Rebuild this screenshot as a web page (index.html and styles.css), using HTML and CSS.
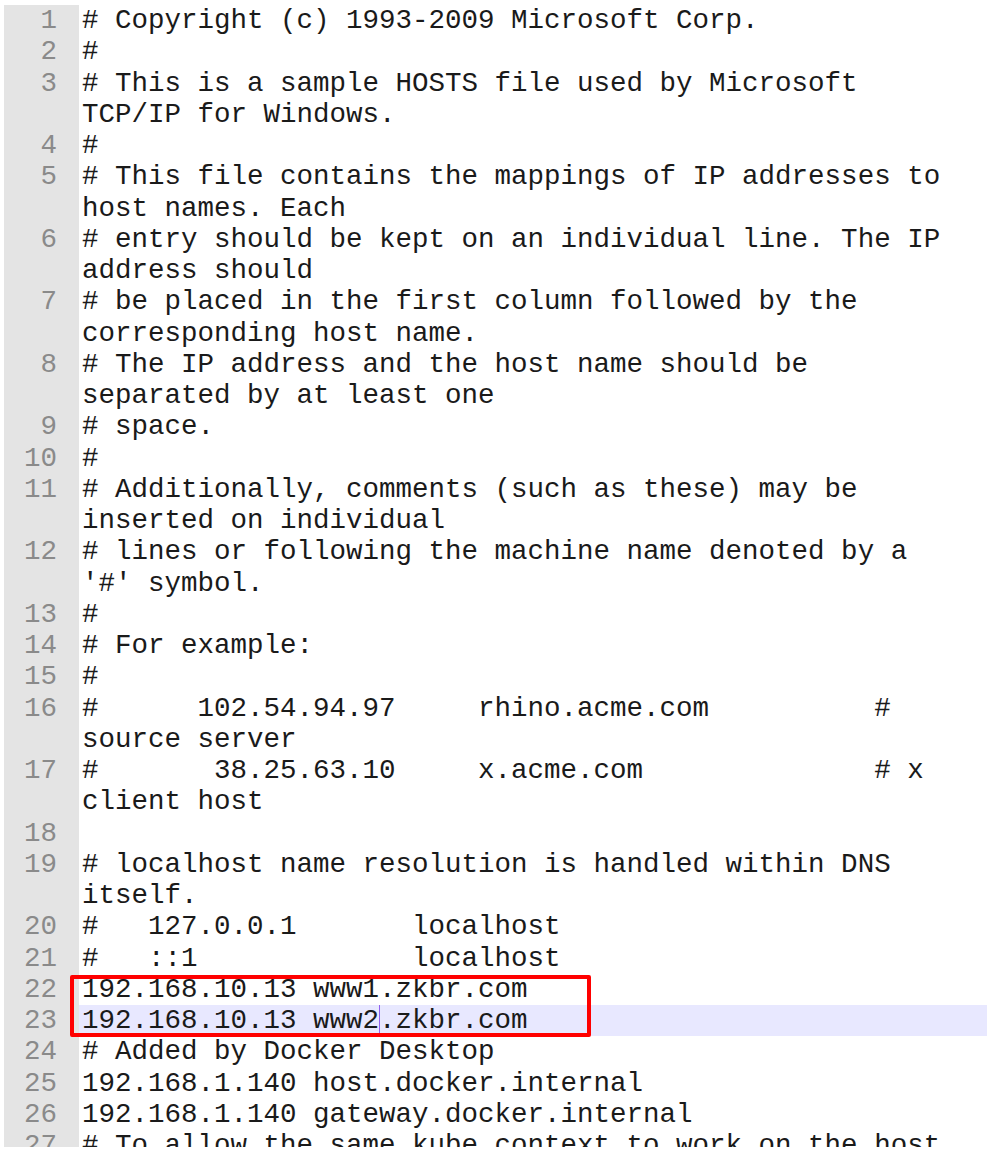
FILE: index.html
```html
<!DOCTYPE html>
<html>
<head>
<meta charset="utf-8">
<link rel="stylesheet" href="styles.css">
</head>
<body>
<div class="editor">
  <div class="line"><div class="num">1</div><div class="txt"># Copyright (c) 1993-2009 Microsoft Corp.</div></div>
  <div class="line"><div class="num">2</div><div class="txt">#</div></div>
  <div class="line"><div class="num">3</div><div class="txt"># This is a sample HOSTS file used by Microsoft TCP/IP for Windows.</div></div>
  <div class="line"><div class="num">4</div><div class="txt">#</div></div>
  <div class="line"><div class="num">5</div><div class="txt"># This file contains the mappings of IP addresses to host names. Each</div></div>
  <div class="line"><div class="num">6</div><div class="txt"># entry should be kept on an individual line. The IP address should</div></div>
  <div class="line"><div class="num">7</div><div class="txt"># be placed in the first column followed by the corresponding host name.</div></div>
  <div class="line"><div class="num">8</div><div class="txt"># The IP address and the host name should be separated by at least one</div></div>
  <div class="line"><div class="num">9</div><div class="txt"># space.</div></div>
  <div class="line"><div class="num">10</div><div class="txt">#</div></div>
  <div class="line"><div class="num">11</div><div class="txt"># Additionally, comments (such as these) may be inserted on individual</div></div>
  <div class="line"><div class="num">12</div><div class="txt"># lines or following the machine name denoted by a '#' symbol.</div></div>
  <div class="line"><div class="num">13</div><div class="txt">#</div></div>
  <div class="line"><div class="num">14</div><div class="txt"># For example:</div></div>
  <div class="line"><div class="num">15</div><div class="txt">#</div></div>
  <div class="line"><div class="num">16</div><div class="txt">#      102.54.94.97     rhino.acme.com          # source server</div></div>
  <div class="line"><div class="num">17</div><div class="txt">#       38.25.63.10     x.acme.com              # x client host</div></div>
  <div class="line"><div class="num">18</div><div class="txt"></div></div>
  <div class="line"><div class="num">19</div><div class="txt"># localhost name resolution is handled within DNS itself.</div></div>
  <div class="line"><div class="num">20</div><div class="txt">#   127.0.0.1       localhost</div></div>
  <div class="line"><div class="num">21</div><div class="txt">#   ::1             localhost</div></div>
  <div class="mark">
    <div class="line"><div class="num">22</div><div class="txt">192.168.10.13 www1.zkbr.com</div></div>
    <div class="line current"><div class="num">23</div><div class="txt">192.168.10.13 www2<span class="caret"></span>.zkbr.com</div></div>
  </div>
  <div class="line"><div class="num">24</div><div class="txt"># Added by Docker Desktop</div></div>
  <div class="line"><div class="num">25</div><div class="txt">192.168.1.140 host.docker.internal</div></div>
  <div class="line"><div class="num">26</div><div class="txt">192.168.1.140 gateway.docker.internal</div></div>
  <div class="line"><div class="num">27</div><div class="txt"># To allow the same kube context to work on the host and the container:</div></div>
</div>
</body>
</html>
```

FILE: styles.css
```css
html, body {
  margin: 0;
  padding: 0;
  background: #ffffff;
}

.editor {
  margin: 5px 0 0 4px;
  height: 1142px;
  overflow: hidden;
  font-family: "Liberation Mono", "Courier New", monospace;
  font-size: 27.5px;
  line-height: 31.25px;
  color: #1a1a1a;
}

.line {
  display: grid;
  grid-template-columns: 75px 1fr;
}

.num {
  background: #e4e4e4;
  color: #8a8a8a;
  text-align: right;
  padding-right: 22px;
}

.txt {
  padding-left: 3px;
  white-space: pre-wrap;
  min-height: 31.25px;
  padding-right: 40px;
  max-width: 52.5ch;
}

.current .txt {
  background: #e8e8ff;
  max-width: none;
  padding-right: 0;
}

.mark {
  position: relative;
}

.mark::after {
  content: "";
  position: absolute;
  left: 66px;
  top: 1px;
  width: 521px;
  height: 62px;
  border: 4px solid #ff0000;
  border-radius: 2px;
  box-sizing: border-box;
  pointer-events: none;
}

.caret {
  border-left: 1px solid #9060f0;
  margin-right: -1px;
}
```
